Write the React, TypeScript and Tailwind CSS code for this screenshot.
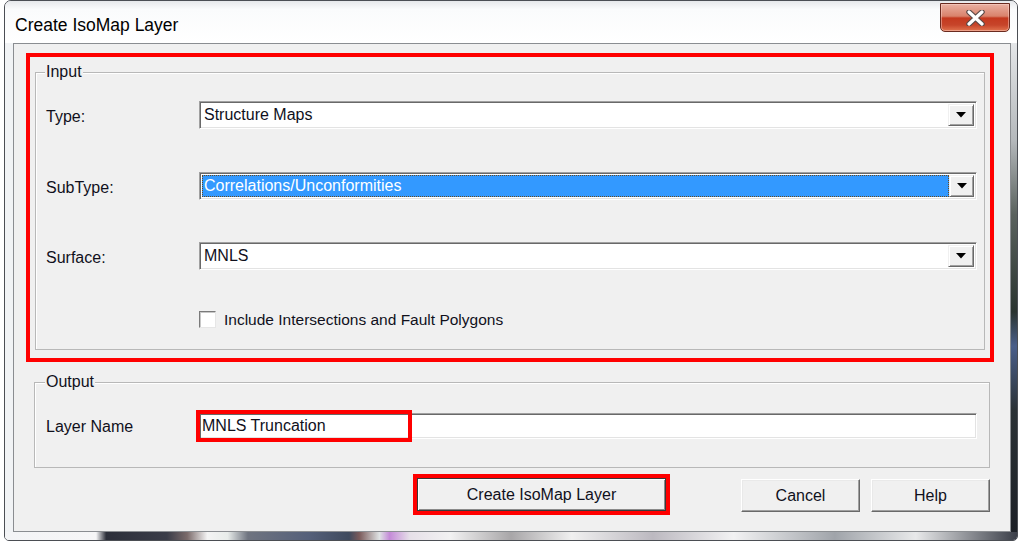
import React from "react";

const font = { fontFamily: '"Liberation Sans", Arial, sans-serif' };

function Arrow() {
  return (
    <svg width="10" height="6" viewBox="0 0 10 6">
      <polygon points="0,0 10,0 5,5.5" fill="#000" />
    </svg>
  );
}

function Combo({ value, selected }: { value: string; selected?: boolean }) {
  return (
    <div className="flex h-[28px] w-[778px] border border-t-[#a0a0a0] border-l-[#a0a0a0] border-b-white border-r-white bg-white shadow-[inset_1px_1px_0_#696969,inset_-1px_-1px_0_#e3e3e3] p-[2px]">
      <div className="flex flex-1 items-center">
        {selected ? (
          <div className="flex h-[22px] w-[747px] items-center border border-dotted border-[#6b4a1e] bg-[#3399ff] pl-[1px] text-[16px] text-white">
            {value}
          </div>
        ) : (
          <div className="pl-[2px] text-[16px] text-[#10101c]">{value}</div>
        )}
      </div>
      <div className="flex h-[22px] w-[26px] items-center justify-center border border-t-[#f0f0f0] border-l-[#f0f0f0] border-b-[#696969] border-r-[#696969] bg-[#f0f0f0] shadow-[inset_1px_1px_0_#ffffff,inset_-1px_-1px_0_#a0a0a0]">
        <Arrow />
      </div>
    </div>
  );
}

function Row({ label, children, mt }: { label: string; children: React.ReactNode; mt: string }) {
  return (
    <div className={`flex items-center ${mt}`}>
      <div className="w-[153px] pt-[3px] text-[16px] text-[#10101c]">{label}</div>
      {children}
    </div>
  );
}

function Btn({ children, def, w, mt, ml }: { children: React.ReactNode; def?: boolean; w: string; mt: string; ml: string }) {
  return (
    <div className={`relative ${ml} ${mt}`}>
      <div
        className={`flex h-[33px] ${w} items-center justify-center bg-[#f0f0f0] text-[16px] text-[#10101c] border ${
          def
            ? "border-[#3a3a3a] shadow-[inset_1px_1px_0_#ffffff,inset_-1px_-1px_0_#8a8a8a]"
            : "border-t-white border-l-white border-b-[#696969] border-r-[#696969] shadow-[inset_-1px_-1px_0_#a0a0a0,inset_1px_1px_0_#e9e9e9]"
        }`}
      >
        {children}
      </div>
      {def && <div className="absolute left-[-4px] top-[-4px] h-[41px] w-[257px] border-4 border-[#ff0000]" />}
    </div>
  );
}

export default function App() {
  return (
    <div className="h-[544px] w-[1024px] overflow-hidden bg-white" style={font}>
      <div className="ml-[4px] flex h-[541px] w-[1014px] flex-col overflow-hidden rounded-t-[7px] rounded-b-[5px] border border-[#4b4e54] bg-[#f4f6f8]">
        {/* title bar */}
        <div className="flex h-[42px] items-start justify-between bg-[linear-gradient(180deg,#e6e8eb_0%,#fafbfc_20%,#ffffff_100%)]">
          <div className="pl-[10px] pt-[14px] text-[17.5px] leading-[20px] text-black">Create IsoMap Layer</div>
          <div className="mr-[7px] mt-[2px] flex h-[29px] w-[70px] items-center justify-center rounded-b-[5px] border border-[#6a2a1f] bg-[linear-gradient(180deg,#eab0a2_0%,#d9826b_45%,#c4391f_52%,#c7452a_78%,#e1744f_100%)] shadow-[inset_0_0_0_1px_rgba(255,220,210,0.45)]">
            <svg width="19" height="16" viewBox="0 0 19 16">
              <path d="M3 2 L16 14 M16 2 L3 14" stroke="#5a4a48" strokeWidth="5.5" strokeLinecap="round" />
              <path d="M3 2 L16 14 M16 2 L3 14" stroke="#ffffff" strokeWidth="3.2" strokeLinecap="round" />
            </svg>
          </div>
        </div>
        {/* middle */}
        <div className="flex">
          <div className="w-[8px] bg-[#f1f3f5]" />
          <div className="h-[489px] w-[998px] border border-[#8a8d91] bg-[#f0f0f0]">
            {/* input red highlight */}
            <div className="ml-[12px] mt-[9px] h-[309px] w-[968px] border-4 border-[#ff0000]">
              <div className="relative ml-[5px] mt-[15px] h-[278px] w-[950px] border border-[#b8b8b8] shadow-[inset_1px_1px_0_#ffffff]">
                <div className="absolute left-[9px] top-[-11px] bg-[#f0f0f0] px-[1px] text-[16px] leading-[20px] text-[#10101c]">Input</div>
                <div className="flex flex-col pl-[10px] pt-[28px]">
                  <Row label="Type:" mt="mt-0">
                    <Combo value="Structure Maps" />
                  </Row>
                  <Row label="SubType:" mt="mt-[43px]">
                    <Combo value="Correlations/Unconformities" selected />
                  </Row>
                  <Row label="Surface:" mt="mt-[42px]">
                    <Combo value="MNLS" />
                  </Row>
                  <div className="ml-[153px] mt-[38px] flex items-center gap-[8px]">
                    <div className="h-[17px] w-[17px] border border-t-[#7a7a7a] border-l-[#7a7a7a] border-b-[#e6e6e6] border-r-[#e6e6e6] bg-white shadow-[inset_1px_1px_0_#c8c8c8]" />
                    <div className="text-[15.5px] text-[#10101c]">Include Intersections and Fault Polygons</div>
                  </div>
                </div>
              </div>
            </div>
            {/* output */}
            <div className="relative ml-[20px] mt-[20px] h-[86px] w-[956px] border border-[#b8b8b8] shadow-[inset_1px_1px_0_#ffffff]">
              <div className="absolute left-[10px] top-[-11px] bg-[#f0f0f0] px-[1px] text-[16px] leading-[20px] text-[#10101c]">Output</div>
              <div className="flex items-center pl-[11px] pt-[30px]">
                <div className="w-[153px] pt-[2px] text-[16px] text-[#10101c]">Layer Name</div>
                <div className="relative">
                  <div className="flex h-[26px] w-[778px] items-center border border-t-[#a0a0a0] border-l-[#a0a0a0] border-b-white border-r-white bg-white pl-[2px] text-[16px] text-[#10101c] shadow-[inset_1px_1px_0_#696969,inset_-1px_-1px_0_#e3e3e3]">
                    MNLS Truncation
                  </div>
                  <div className="absolute left-[-3px] top-[-3px] h-[32px] w-[216px] border-4 border-[#ff0000]" />
                </div>
              </div>
            </div>
            {/* buttons */}
            <div className="flex items-start">
              <Btn def w="w-[249px]" mt="mt-[10px]" ml="ml-[403px]">Create IsoMap Layer</Btn>
              <Btn w="w-[119px]" mt="mt-[11px]" ml="ml-[75px]">Cancel</Btn>
              <Btn w="w-[119px]" mt="mt-[11px]" ml="ml-[11px]">Help</Btn>
            </div>
          </div>
          <div className="flex-1 bg-[linear-gradient(180deg,#e4e6e8_0%,#b4b8bb_20%,#5a625e_35%,#2a3430_55%,#4a5f8a_62%,#2b3236_75%,#1c2026_100%)]" />
        </div>
        {/* bottom glass strip */}
        <div className="flex-1 bg-[linear-gradient(90deg,#f3f4f6_0%,#f6f6f7_9%,#2c2f3a_10%,#3a3c48_16%,#7a6a6a_18%,#f4f4f4_20%,#e8ecea_22%,#6f7480_24%,#55607a_30%,#3f4a5e_34%,#7a5a5a_35%,#dfe3e4_37%,#c48ad8_38%,#e6e0e8_40%,#f2f2f2_44%,#a8a6a8_50%,#f0f0f0_56%,#bcb9c0_64%,#f2f2f3_72%,#a0a4aa_82%,#e8e9ea_90%,#3a3e48_100%)]" />
      </div>
    </div>
  );
}
